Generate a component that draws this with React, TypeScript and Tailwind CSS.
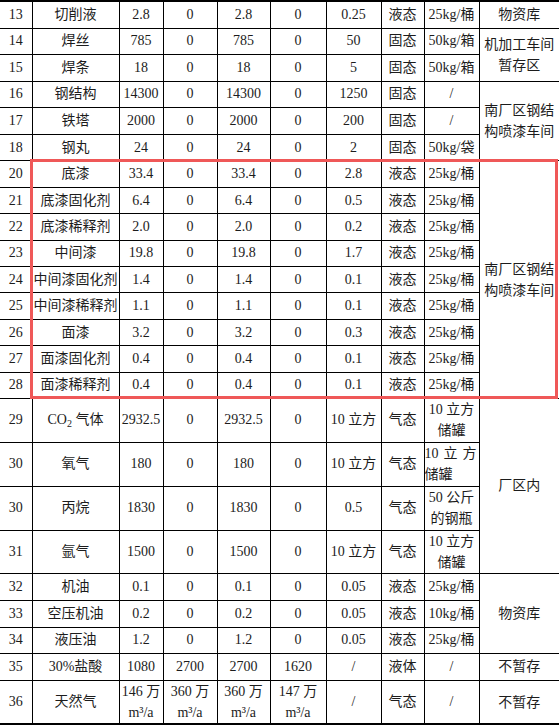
import type { ReactNode } from "react";

type Row = {
  h: string;
  cells: ReactNode[];
  last?: { text: ReactNode; span: number };
};

const two = (a: string, b: ReactNode) => (
  <div className="flex flex-col items-center leading-[21px]">
    <span>{a}</span>
    <span>{b}</span>
  </div>
);

const m3 = "m³/a";

const liquid = (no: string, name: string, v: string, e: string, last?: Row["last"]): Row => ({
  h: "h-[26.4px]",
  cells: [no, name, v, "0", v, "0", e, "液态", "25kg/桶"],
  last,
});

const rows: Row[] = [
  { h: "h-[27px]", cells: ["13", "切削液", "2.8", "0", "2.8", "0", "0.25", "液态", "25kg/桶"], last: { text: "物资库", span: 1 } },
  { h: "h-[26.6px]", cells: ["14", "焊丝", "785", "0", "785", "0", "50", "固态", "50kg/箱"], last: { text: "机加工车间暂存区", span: 2 } },
  { h: "h-[26.6px]", cells: ["15", "焊条", "18", "0", "18", "0", "5", "固态", "50kg/箱"] },
  { h: "h-[26.6px]", cells: ["16", "钢结构", "14300", "0", "14300", "0", "1250", "固态", "/"], last: { text: "南厂区钢结构喷漆车间", span: 3 } },
  { h: "h-[26.6px]", cells: ["17", "铁塔", "2000", "0", "2000", "0", "200", "固态", "/"] },
  { h: "h-[26.6px]", cells: ["18", "钢丸", "24", "0", "24", "0", "2", "固态", "50kg/袋"] },
  liquid("20", "底漆", "33.4", "2.8", { text: "南厂区钢结构喷漆车间", span: 9 }),
  liquid("21", "底漆固化剂", "6.4", "0.5"),
  liquid("22", "底漆稀释剂", "2.0", "0.2"),
  liquid("23", "中间漆", "19.8", "1.7"),
  liquid("24", "中间漆固化剂", "1.4", "0.1"),
  liquid("25", "中间漆稀释剂", "1.1", "0.1"),
  liquid("26", "面漆", "3.2", "0.3"),
  liquid("27", "面漆固化剂", "0.4", "0.1"),
  liquid("28", "面漆稀释剂", "0.4", "0.1"),
  {
    h: "h-[44px]",
    cells: [
      "29",
      <span>
        CO<sub className="text-[10px]">2</sub> 气体
      </span>,
      "2932.5",
      "0",
      "2932.5",
      "0",
      "10 立方",
      "气态",
      two("10 立方", "储罐"),
    ],
    last: { text: "厂区内", span: 4 },
  },
  {
    h: "h-[44px]",
    cells: [
      "30",
      "氧气",
      "180",
      "0",
      "180",
      "0",
      "10 立方",
      "气态",
      <div className="flex flex-col leading-[21px] text-left">
        <span className="flex justify-between pr-[2px]">
          <span>10</span>
          <span>立</span>
          <span>方</span>
        </span>
        <span>储罐</span>
      </div>,
    ],
  },
  { h: "h-[44px]", cells: ["30", "丙烷", "1830", "0", "1830", "0", "0.5", "气态", two("50 公斤", "的钢瓶")] },
  { h: "h-[43px]", cells: ["31", "氩气", "1500", "0", "1500", "0", "10 立方", "气态", two("10 立方", "储罐")] },
  { h: "h-[27px]", cells: ["32", "机油", "0.1", "0", "0.1", "0", "0.05", "液态", "25kg/桶"], last: { text: "物资库", span: 3 } },
  { h: "h-[26.6px]", cells: ["33", "空压机油", "0.2", "0", "0.2", "0", "0.05", "液态", "10kg/桶"] },
  { h: "h-[26.6px]", cells: ["34", "液压油", "1.2", "0", "1.2", "0", "0.05", "液态", "25kg/桶"] },
  { h: "h-[26.6px]", cells: ["35", "30%盐酸", "1080", "2700", "2700", "1620", "/", "液体", "/"], last: { text: "不暂存", span: 1 } },
  {
    h: "h-[44px]",
    cells: ["36", "天然气", two("146 万", m3), two("360 万", m3), two("360 万", m3), two("147 万", m3), "/", "气态", "/"],
    last: { text: "不暂存", span: 1 },
  },
];

const widths = ["w-[32px]", "w-[87px]", "w-[44px]", "w-[54px]", "w-[53px]", "w-[56px]", "w-[55px]", "w-[43px]", "w-[55px]", "w-[80px]"];

export default function App() {
  return (
    <div
      className="relative w-[559px] bg-white text-[14px] text-[#1c1c1c]"
      style={{ fontFamily: '"Liberation Serif", "Noto Sans CJK SC", serif' }}
    >
      <table className="w-[559px] table-fixed border-collapse border-t-2 border-b-2 border-black">
        <colgroup>
          {widths.map((w, i) => (
            <col key={i} className={w} />
          ))}
        </colgroup>
        <tbody>
          {rows.map((r, ri) => (
            <tr key={ri} className={r.h}>
              {r.cells.map((c, ci) => (
                <td
                  key={ci}
                  className={`border border-black p-0 text-center align-middle whitespace-nowrap leading-[18px] ${ci === 0 ? "border-l-0" : ""}`}
                >
                  {c}
                </td>
              ))}
              {r.last && (
                <td
                  rowSpan={r.last.span}
                  className="border border-r-0 border-black px-[4px] text-center align-middle leading-[21px]"
                >
                  {r.last.text}
                </td>
              )}
            </tr>
          ))}
        </tbody>
      </table>
      <div className="pointer-events-none absolute left-[30px] top-[159px] h-[240px] w-[528px] border-[3px] border-[#ef5858]" />
    </div>
  );
}
